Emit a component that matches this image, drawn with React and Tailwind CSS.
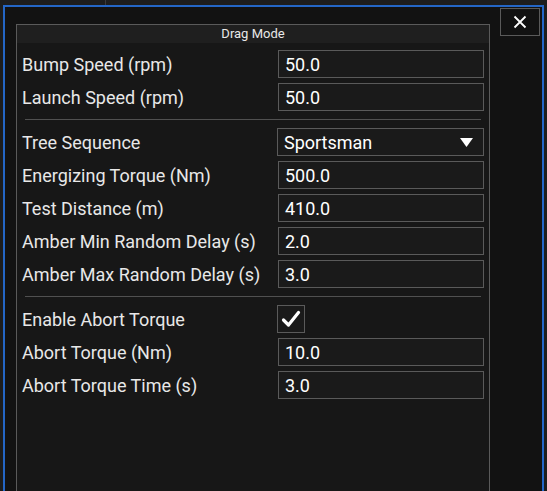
import React from 'react'

const Field = ({ label, value }) => (
  <div className="flex h-[28px] items-center">
    <span className="w-[261px] pl-[5px] text-[18px] text-[#e8e8e8]">{label}</span>
    <div className="flex h-[28px] w-[206px] items-center border border-[#5a5a5a] bg-[#1a1a1a] px-[6px] text-[18px] text-white">
      {value}
    </div>
  </div>
)

const Select = ({ label, value }) => (
  <div className="flex h-[28px] items-center">
    <span className="w-[260px] pl-[5px] text-[18px] text-[#e8e8e8]">{label}</span>
    <div className="flex h-[28px] w-[207px] items-center justify-between border border-[#5a5a5a] bg-[#1a1a1a] px-[6px] text-[18px] text-white">
      {value}
      <svg width="13" height="9" viewBox="0 0 13 9" className="mr-[4px]">
        <polygon points="0,0 13,0 6.5,9" fill="#ffffff" />
      </svg>
    </div>
  </div>
)

const Check = ({ label, checked }) => (
  <div className="flex h-[28px] items-center">
    <span className="w-[260px] pl-[5px] text-[18px] text-[#e8e8e8]">{label}</span>
    <div className="flex h-[28px] w-[28px] items-center justify-center border border-[#5a5a5a] bg-[#1a1a1a]">
      {checked && (
        <svg width="20" height="18" viewBox="0 0 20 18">
          <path d="M2.5 10 L7.5 15 L17.5 2.5" fill="none" stroke="#ffffff" strokeWidth="3.2" strokeLinecap="round" strokeLinejoin="round" />
        </svg>
      )}
    </div>
  </div>
)

const Divider = () => <div className="my-[8px] ml-[8px] h-px w-[456px] bg-[#505050]" />

export default function App() {
  return (
    <div className="relative h-[491px] w-[547px] overflow-hidden bg-[#1d1d1d] pl-[3px] pr-[3px] pt-[5px]" style={{ fontFamily: 'Roboto, "Noto Sans", sans-serif' }}>
      {/* background window bits */}
      <div className="absolute left-[105px] top-0 h-[5px] w-px bg-[#3a3a3a]" />

      <div className="relative h-[500px] border-2 border-[#2466c6] bg-[#121212] pl-[11px] pt-[17px]">
        <button className="absolute right-[2px] top-[1px] flex h-[28px] w-[40px] items-center justify-center border border-[#5a5a5a] bg-[#121212]">
          <svg width="14" height="14" viewBox="0 0 14 14">
            <path d="M1.5 1.5 L12.5 12.5 M12.5 1.5 L1.5 12.5" stroke="#ffffff" strokeWidth="1.8" />
          </svg>
        </button>

        <div className="h-[480px] w-[474px] border border-[#5a5a5a] bg-[#171717]">
          <div className="flex h-[18px] items-center justify-center bg-[#1f1f1f] text-[13px] text-[#e8e8e8]">Drag Mode</div>

          <div className="flex flex-col gap-[5px] pt-[7px]">
            <Field label="Bump Speed (rpm)" value="50.0" />
            <Field label="Launch Speed (rpm)" value="50.0" />
          </div>
          <Divider />
          <div className="flex flex-col gap-[5px]">
            <Select label="Tree Sequence" value="Sportsman" />
            <Field label="Energizing Torque (Nm)" value="500.0" />
            <Field label="Test Distance (m)" value="410.0" />
            <Field label="Amber Min Random Delay (s)" value="2.0" />
            <Field label="Amber Max Random Delay (s)" value="3.0" />
          </div>
          <Divider />
          <div className="flex flex-col gap-[5px]">
            <Check label="Enable Abort Torque" checked />
            <Field label="Abort Torque (Nm)" value="10.0" />
            <Field label="Abort Torque Time (s)" value="3.0" />
          </div>
        </div>
      </div>
    </div>
  )
}
